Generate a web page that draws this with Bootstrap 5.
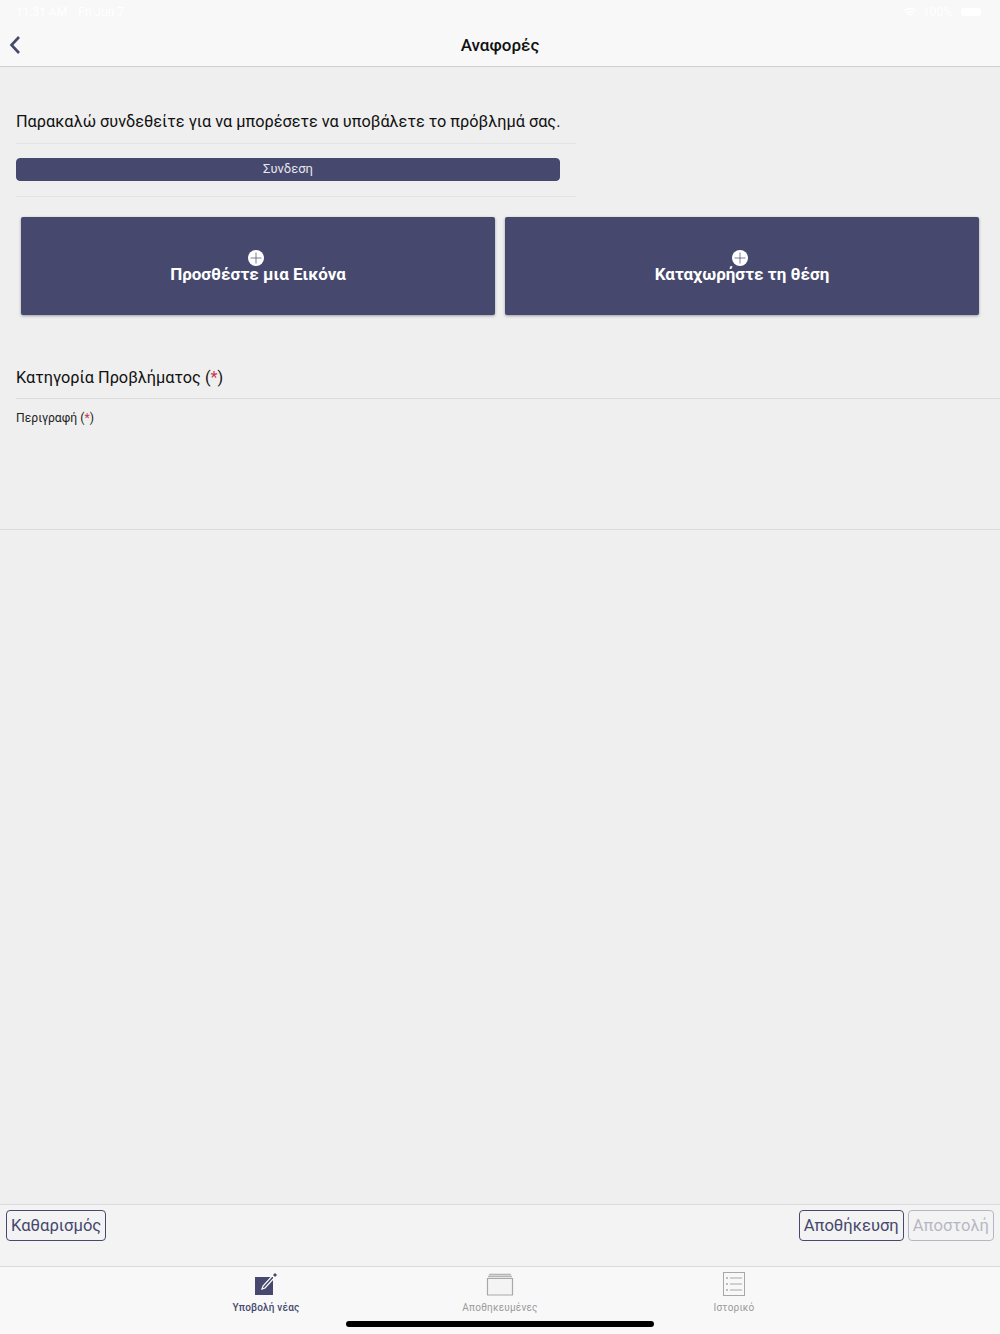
<!DOCTYPE html>
<html lang="el">
<head>
<meta charset="utf-8">
<title>Αναφορές</title>
<link href="https://cdn.jsdelivr.net/npm/bootstrap@5.3.0/dist/css/bootstrap.min.css" rel="stylesheet">
<style>
html,body{height:100%;margin:0}
body{font-family:Roboto,"Noto Sans",sans-serif;background:#efefef;color:#111;overflow:hidden}
.app-shell{height:1334px}
.top-zone{height:67px;background:#f8f8f8;border-bottom:1px solid #cfcfcf}
.status-row{height:24px;padding:4px 16px 0;color:#fff;font-size:12px;line-height:16px;font-weight:400}
.status-row span+span{margin-left:11px}
.title-row{height:42px;position:relative}
.title-text{font-size:17px;font-weight:500;line-height:43px;color:#111}
.back-btn{position:absolute;left:8px;top:11px;line-height:0}
.login-zone{padding-top:43px}
.prompt-text{margin:0 0 0 16px;width:560px;height:34px;font-size:16.3px;line-height:23px;border-bottom:1px solid #e4e4e4;white-space:nowrap}
.login-wrap{margin-left:16px;width:560px;height:53px;padding-top:14px;border-bottom:1px solid #e4e4e4}
.login-btn{display:block;width:544px;height:23px;padding:0 0 1px;background:#46486d;border:1px solid #46486d;color:#e6e6ee;font-size:13px;line-height:18px;border-radius:4px}
.tile-row{padding:20px 21px 0;gap:10px}
.tile-box{flex:1 1 0;height:98px;background:#46486d;color:#fff;border-radius:2px;box-shadow:0 1px 3px rgba(0,0,0,.35);padding-top:33px;font-weight:700;font-size:17px;line-height:20px}
.tile-plus{display:block;width:16px;height:16px;margin:0 auto -2px;position:relative;left:-2.5px}
.cat-line{margin:48px 0 0 16px;height:36px;font-size:16.3px;line-height:24px;padding-top:3px;border-bottom:1px solid #dcdcdc}
.req-mark{color:#c8384a}
.desc-line{height:131px;padding:11px 16px 0;font-size:12.2px;line-height:16px;border-bottom:1px solid #dcdcdc;color:#222}
.action-zone{height:63px;padding:5px 6px;background:#f3f3f3;border-top:1px solid #dcdcdc;border-bottom:1px solid #dcdcdc}
.act-btn{height:31px;padding:0 4px;font-size:16.6px;line-height:27px;color:#46486d;background:transparent;border:1px solid #46486d;border-radius:4px}
.act-btn:disabled{color:#46486d;opacity:.35;border-color:#46486d;background:transparent}
.tab-zone{background:#f8f8f8;height:67px;position:relative}
.tab-item{flex:0 0 234px;font-size:10px;line-height:12px;color:#9a9a9a;padding-top:5px;letter-spacing:.2px}
.tab-item svg{display:block;margin:0 auto 6px}
.tab-item.on{color:#46486d;font-weight:500}
.home-pill{position:absolute;left:346px;top:54px;width:308px;height:6px;background:#000;border-radius:3px}
</style>
</head>
<body>
<div class="app-shell d-flex flex-column">
  <header class="top-zone flex-shrink-0">
    <div class="status-row d-flex align-items-start">
      <span>11:31 AM</span><span>Fri Jun 7</span>
      <div class="ms-auto d-flex align-items-center gap-1">
        <svg width="14" height="11" viewBox="0 0 14 11"><path d="M1 4a9 9 0 0 1 12 0M3 6.2a6 6 0 0 1 8 0M5 8.2a3 3 0 0 1 4 0" fill="none" stroke="#fff" stroke-width="1.5"/></svg>
        <span style="margin-left:2px">100%</span>
        <svg width="24" height="12" viewBox="0 0 24 12" class="ms-1"><rect x="1" y="2" width="20" height="8" rx="2" fill="#fff"/></svg>
      </div>
    </div>
    <div class="title-row text-center">
      <a class="back-btn" href="#" aria-label="Πίσω"><svg width="14" height="20" viewBox="0 0 14 20"><path d="M11 2 3.5 10l7.5 8" fill="none" stroke="#46486d" stroke-width="2.6"/></svg></a>
      <div class="title-text">Αναφορές</div>
    </div>
  </header>

  <main class="flex-grow-1">
    <div class="login-zone">
      <p class="prompt-text">Παρακαλώ συνδεθείτε για να μπορέσετε να υποβάλετε το πρόβλημά σας.</p>
      <div class="login-wrap"><button class="login-btn btn" type="button">Συνδεση</button></div>
    </div>
    <div class="tile-row d-flex text-center">
      <div class="tile-box">
        <svg class="tile-plus" viewBox="0 0 16 16"><circle cx="8" cy="8" r="8" fill="#fff"/><path d="M8 2.5v11M2.5 8h11" stroke="#46486d" stroke-width=".7"/></svg>
        Προσθέστε μια Εικόνα
      </div>
      <div class="tile-box">
        <svg class="tile-plus" viewBox="0 0 16 16"><circle cx="8" cy="8" r="8" fill="#fff"/><path d="M8 2.5v11M2.5 8h11" stroke="#46486d" stroke-width=".7"/></svg>
        Καταχωρήστε τη θέση
      </div>
    </div>
    <div class="cat-line">Κατηγορία Προβλήματος (<span class="req-mark">*</span>)</div>
    <div class="desc-line">Περιγραφή (<span class="req-mark">*</span>)</div>
  </main>

  <div class="action-zone d-flex justify-content-between flex-shrink-0">
    <button class="act-btn btn" type="button">Καθαρισμός</button>
    <div class="d-flex gap-1">
      <button class="act-btn btn" type="button">Αποθήκευση</button>
      <button class="act-btn btn" type="button" disabled>Αποστολή</button>
    </div>
  </div>

  <nav class="tab-zone d-flex justify-content-center flex-shrink-0 text-center">
    <div class="tab-item on">
      <svg width="24" height="24" viewBox="0 0 24 24"><rect x="1" y="5" width="18" height="18" fill="#46486d"/><path d="M8 17l1-3 10-11 2 2L11 16z" fill="none" stroke="#fff" stroke-width="1.2"/><path d="M19 3l2-2 2 2-2 2z" fill="#46486d"/></svg>
      Υποβολή νέας
    </div>
    <div class="tab-item">
      <svg width="28" height="24" viewBox="0 0 28 24"><path d="M3 2.5h22M2 4.5h24" stroke="#b5b5b5" stroke-width="1.4"/><path d="M1.5 6.5h25v16.5h-25z" fill="#f4f4f4" stroke="#a8a8a8" stroke-width="1.2"/></svg>
      Αποθηκευμένες
    </div>
    <div class="tab-item">
      <svg width="24" height="24" viewBox="0 0 24 24"><rect x="1.5" y=".5" width="21" height="23" fill="none" stroke="#a8a8a8"/><path d="M8 6h12M8 12h12M8 18h12" stroke="#a8a8a8" stroke-width="1.2"/><path d="M4 6h2M4 12h2M4 18h2" stroke="#808080" stroke-width="1.2"/></svg>
      Ιστορικό
    </div>
    <div class="home-pill"></div>
  </nav>
</div>
<script src="https://cdn.jsdelivr.net/npm/bootstrap@5.3.0/dist/js/bootstrap.bundle.min.js"></script>
</body>
</html>
